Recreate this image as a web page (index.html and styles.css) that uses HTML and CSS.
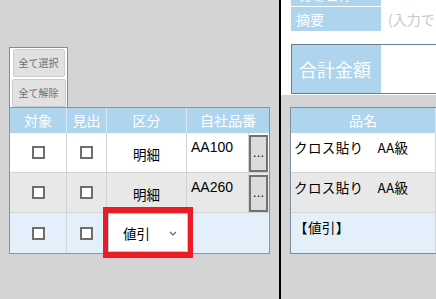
FILE: index.html
```html
<!DOCTYPE html>
<html lang="ja">
<head>
<meta charset="utf-8">
<link rel="stylesheet" href="styles.css">
</head>
<body>
<div class="screen">
  <section class="left">
    <div class="btn-box">
      <button class="btn btn-select">全て選択</button>
      <button class="btn btn-clear">全て解除</button>
    </div>
    <div class="grid">
      <div class="grow head">
        <div class="hc">対象</div>
        <div class="hc">見出</div>
        <div class="hc">区分</div>
        <div class="hc last">自社品番</div>
      </div>
      <div class="grow row r-white">
        <div class="c center"><span class="chk"></span></div>
        <div class="c center"><span class="chk"></span></div>
        <div class="c center"><span class="kind">明細</span></div>
        <div class="c code"><span class="code-text">AA100</span><span class="dots">…</span></div>
      </div>
      <div class="grow row r-grey">
        <div class="c center"><span class="chk"></span></div>
        <div class="c center"><span class="chk"></span></div>
        <div class="c center"><span class="kind">明細</span></div>
        <div class="c code"><span class="code-text">AA260</span><span class="dots">…</span></div>
      </div>
      <div class="grow row r-blue lastrow">
        <div class="c center"><span class="chk"></span></div>
        <div class="c center"><span class="chk"></span></div>
        <div class="c sel-cell">
          <div class="select">
            <span>値引</span>
            <svg class="chev" width="8" height="5" viewBox="0 0 8 5"><path d="M1 1 L4 4 L7 1" fill="none" stroke="#666" stroke-width="1.2"/></svg>
          </div>
        </div>
        <div class="c nob"></div>
      </div>
    </div>
  </section>
  <div class="divider"></div>
  <section class="right">
    <div class="summary">
      <div class="info-row first">
        <div class="info-label">現場名称</div>
        <div class="info-value dark">－</div>
      </div>
      <div class="info-row">
        <div class="info-label">摘要</div>
        <div class="info-value">(入力できます)</div>
      </div>
      <div class="total">
        <div class="total-label">合計金額</div>
        <div class="total-value"></div>
      </div>
    </div>
    <div class="items-area">
      <div class="items">
        <div class="ihead">
          <div class="ih">品名</div>
          <div class="ih">数量</div>
        </div>
        <div class="irow r-white"><div class="ic">クロス貼り　AA級</div><div class="ic"></div></div>
        <div class="irow r-grey"><div class="ic">クロス貼り　AA級</div><div class="ic"></div></div>
        <div class="irow r-blue lastrow"><div class="ic">【値引】</div><div class="ic"></div></div>
      </div>
    </div>
  </section>
</div>
</body>
</html>
```
FILE: styles.css
```css
* { box-sizing: border-box; }
html, body { margin: 0; padding: 0; }
body {
  width: 436px;
  height: 299px;
  overflow: hidden;
  font-family: "Liberation Sans", "Noto Sans CJK JP", sans-serif;
  background: #d4d4d4;
}
.screen {
  display: flex;
  width: 436px;
  height: 299px;
}
.left {
  width: 279px;
  flex: none;
  background: #d4d4d4;
  padding: 47px 0 0 9px;
}
.divider {
  width: 2px;
  flex: none;
  background: #000;
}
.right {
  flex: 1;
  min-width: 0;
  overflow: hidden;
  background: #d4d4d4;
}

/* button box */
.btn-box {
  width: 59px;
  height: 60px;
  border: 1px solid #8a8a8a;
  border-bottom: none;
  background: #fff;
  padding-top: 1px;
  display: flex;
  flex-direction: column;
  align-items: center;
  gap: 2px;
}
.btn {
  height: 28px;
  margin: 0;
  padding: 0;
  border: 1px solid #cdcdcd;
  border-radius: 2px;
  background: #e1e1e1;
  color: #6e6e6e;
  font-family: "Noto Sans CJK JP", sans-serif;
  font-size: 10px;
  line-height: 26px;
}
.btn-select { width: 52px; }
.btn-clear { width: 54px; }

/* left grid */
.grid {
  width: 261px;
  border: 1px solid #7d97b2;
  background: #fff;
}
.grow {
  display: grid;
  grid-template-columns: 57px 40px 80px 82px;
}
.head {
  height: 25px;
  background: #aed4ee;
}
.hc {
  color: #fff;
  font-family: "Noto Sans CJK JP", sans-serif;
  font-size: 14px;
  line-height: 25px;
  text-align: center;
  border-right: 1px solid #d9eaf7;
}
.hc.last { border-right: none; }
.row { height: 40px; }
.r-white { background: #fff; }
.r-grey { background: #e8e8e8; }
.r-blue { background: #e3f0fb; }
.c {
  border-right: 1px solid #d3d3d3;
  border-bottom: 1px solid #d3d3d3;
  font-size: 13px;
  color: #000;
  font-family: "Noto Sans CJK JP", sans-serif;
}
.lastrow .c { border-bottom: none; }
.c.nob { border-right: none; }
.center {
  display: flex;
  align-items: center;
  justify-content: center;
}
.kind {
  font-size: 13.5px;
  line-height: 16px;
  margin-top: 2px;
}
.chk {
  width: 13px;
  height: 13px;
  border: 2px solid #6e6e6e;
  background: #fff;
}
.code {
  display: flex;
  border-right: none;
}
.code-text {
  flex: 1;
  padding: 6px 0 0 4px;
  font-family: "Liberation Sans", sans-serif;
  font-size: 14px;
  line-height: 16px;
  border-right: 1px solid #d3d3d3;
}
.dots {
  width: 19px;
  height: 37px;
  margin: 2px 1px 0 0;
  border: 2px solid #727272;
  background: #dcdcdc;
  font-size: 12px;
  line-height: 33px;
  text-align: center;
  font-family: "Liberation Sans", sans-serif;
  color: #000;
}
.sel-cell {
  position: relative;
}
.select {
  width: 80px;
  height: 39px;
  margin-left: 1px;
  background: #fff;
  border: 1px solid #a9cbe3;
  display: flex;
  align-items: center;
  justify-content: space-between;
  padding: 0 10px 0 14px;
  font-family: "Noto Sans CJK JP", sans-serif;
  font-size: 13.5px;
  color: #000;
  box-shadow: 0 0 0 5px #ec1c24, 0 -1px 0 5px #ec1c24, 0 1px 0 5px #ec1c24;
  position: relative;
  z-index: 2;
}
.chev { margin-top: 1px; }

/* right panel */
.summary {
  background: #fff;
  padding: 0 0 1px 10px;
}
.info-row {
  display: flex;
  height: 24px;
  margin-bottom: 1px;
  white-space: nowrap;
}
.info-row.first { margin-top: -18px; }
.info-label {
  width: 90px;
  flex: none;
  background: #aed4ee;
  color: #fff;
  font-family: "Noto Sans CJK JP", sans-serif;
  font-size: 14px;
  line-height: 24px;
  padding-left: 5px;
}
.info-value {
  padding-left: 7px;
  color: #c9c9c9;
  font-family: "Noto Sans CJK JP", sans-serif;
  font-size: 14px;
  line-height: 24px;
}
.info-value.dark { color: #333; }
.total {
  margin-top: 13px;
  height: 50px;
  border: 1px solid #6d7d8d;
  border-right: none;
  display: flex;
  background: #fff;
}
.total-label {
  width: 89px;
  flex: none;
  background: #aed4ee;
  color: #fff;
  font-family: "Noto Sans CJK JP", sans-serif;
  font-size: 18px;
  line-height: 48px;
  padding-left: 7px;
}
.total-value { flex: 1; }
.items-area {
  padding: 12px 0 0 9px;
}
.items {
  width: 300px;
  border: 1px solid #7d8d9d;
  border-right: none;
  background: #fff;
}
.ihead, .irow {
  display: grid;
  grid-template-columns: 145px 150px;
}
.ihead {
  height: 25px;
  background: #aed4ee;
}
.ih {
  color: #fff;
  font-family: "Noto Sans CJK JP", sans-serif;
  font-size: 14px;
  line-height: 25px;
  text-align: center;
  border-right: 1px solid #d9eaf7;
}
.irow { height: 40px; }
.ic {
  border-right: 1px solid #d3d3d3;
  border-bottom: 1px solid #d3d3d3;
  padding: 5px 0 0 3px;
  font-family: "Noto Sans CJK JP", sans-serif;
  font-size: 13.5px;
  line-height: 18px;
  letter-spacing: 0.4px;
  color: #000;
  white-space: nowrap;
  overflow: hidden;
}
.irow.lastrow .ic { border-bottom: none; }
```
